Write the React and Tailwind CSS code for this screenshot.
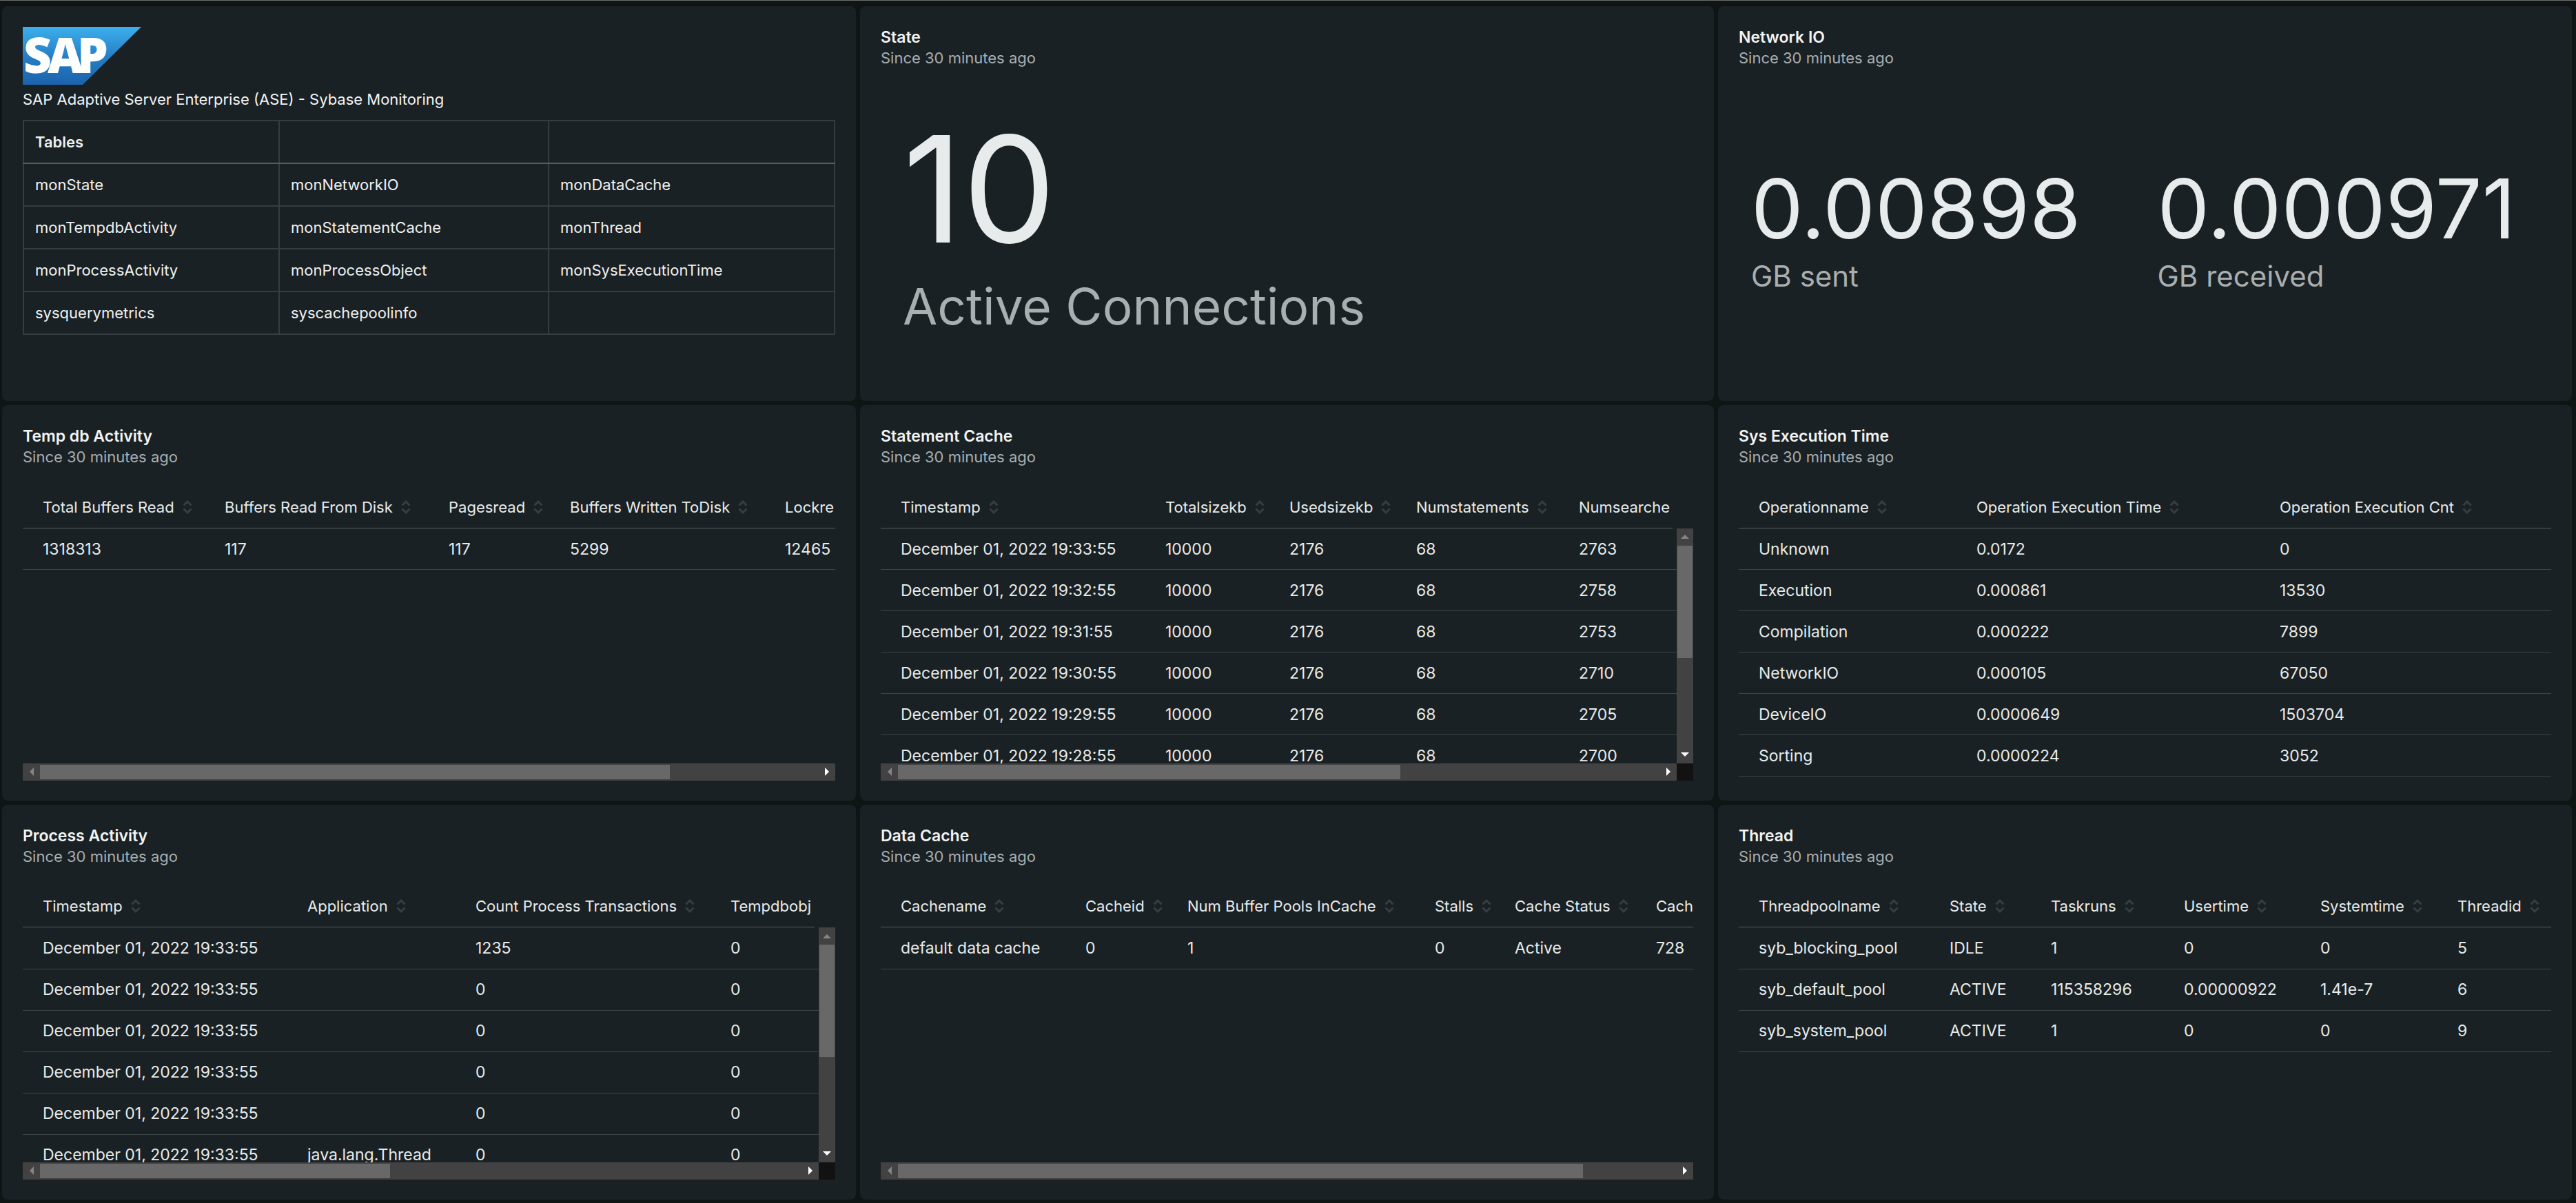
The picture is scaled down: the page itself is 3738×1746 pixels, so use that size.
const sort = (
  <svg viewBox="0 0 14 20" className="h-5 w-3.5 shrink-0 text-[#363e41]" fill="none" stroke="currentColor" strokeWidth="3" aria-hidden="true">
    <path d="M1.5 7.500 7 2l5.500 5.500M1.500 12.500 7 18l5.500-5.500" />
  </svg>
);

function Arrow({ dir, dim }) {
  const paths = {
    left: "M9 4v12L3 10z",
    right: "M3 4v12l6-6z",
    up: "M4 9h12l-6-6z",
    down: "M4 3h12l-6 6z",
  };
  const wide = dir === "up" || dir === "down";
  return (
    <svg viewBox={wide ? "0 0 20 12" : "0 0 12 20"} className={`${wide ? "h-3 w-5" : "h-5 w-3"} ${dim ? "text-[#858585]" : "text-white"}`} fill="currentColor" aria-hidden="true">
      <path d={paths[dir]} />
    </svg>
  );
}

function HBar({ size }) {
  return (
    <div className="flex h-[25px] min-w-0 flex-1 items-center bg-[#424242]">
      <button aria-label="Scroll left" className="flex w-[25px] justify-center"><Arrow dir="left" dim /></button>
      <div className="h-[21px] min-w-0 flex-1">
        <div className="h-full bg-[#686868]" style={{ width: `${size}%` }} />
      </div>
      <button aria-label="Scroll right" className="flex w-[25px] justify-center"><Arrow dir="right" /></button>
    </div>
  );
}

function VBar({ size }) {
  return (
    <div className="flex w-6 shrink-0 flex-col items-center bg-[#424242]">
      <button aria-label="Scroll up" className="flex h-[25px] items-center"><Arrow dir="up" dim /></button>
      <div className="min-h-0 w-[22px] flex-1">
        <div className="w-full bg-[#686868]" style={{ height: `${size}%` }} />
      </div>
      <button aria-label="Scroll down" className="flex h-[25px] items-center"><Arrow dir="down" /></button>
    </div>
  );
}

function Panel({ title, children }) {
  return (
    <section className="flex min-h-0 min-w-0 flex-col overflow-hidden rounded-lg bg-[#1a2124] px-[30px] pt-[30px] pb-[29px]">
      {title && (
        <header className="text-[22px] leading-[30px]">
          <h2 className="text-[23px] font-semibold text-[#f2f4f4]">{title}</h2>
          <p className="text-[#a9aeb0]">Since 30 minutes ago</p>
        </header>
      )}
      {children}
    </section>
  );
}

function Grid({ title, cols, rows, h, v }) {
  const total = cols.reduce((sum, c) => sum + c[1], 0);
  const colgroup = (
    <colgroup>
      {cols.map(([name, w]) => <col key={name} style={{ width: h ? w : `${(w / total) * 100}%` }} />)}
    </colgroup>
  );
  const table = `table-fixed whitespace-nowrap text-left ${h ? "" : "w-full"}`;
  const width = { width: h ? total : undefined };
  return (
    <Panel title={title}>
      <div className="mt-7 flex min-h-0 flex-1 flex-col text-[22px] leading-[30px] text-[#e8ebeb]">
        <div className={`shrink-0 overflow-hidden ${v ? "mr-[30px]" : ""}`}>
          <table className={table} style={width} aria-label={`${title} columns`}>
            {colgroup}
            <thead>
              <tr className="h-[60px] border-b border-[#535d5f]">
                {cols.map(([name]) => (
                  <th key={name} scope="col" className="pl-[29px] font-normal">
                    <button className="flex items-center gap-3">{name}{sort}</button>
                  </th>
                ))}
              </tr>
            </thead>
          </table>
        </div>
        <div className="flex min-h-0 flex-1">
          <div className="min-w-0 flex-1 overflow-hidden">
            <table className={`${table} text-[23px]`} style={width} aria-label={title}>
              {colgroup}
              <tbody>
                {rows.map((r, i) => (
                  <tr key={i} className="h-[60px] border-b border-[#3c4548]">
                    {r.map((cell, j) => <td key={j} className="pl-[29px]">{cell}</td>)}
                  </tr>
                ))}
              </tbody>
            </table>
          </div>
          {v && <VBar size={v} />}
        </div>
        {h && (
          <div className="flex shrink-0">
            <HBar size={h} />
            {v && <div className="w-6 bg-[#121212]" />}
          </div>
        )}
      </div>
    </Panel>
  );
}

function SapLogo() {
  return (
    <svg viewBox="0 0 172 84" className="h-[84px] w-[172px] shrink-0" role="img" aria-label="SAP">
      <defs>
        <linearGradient id="sap" x1="0" y1="0" x2="0" y2="1">
          <stop offset="0" stopColor="#3cb0ec" />
          <stop offset="0.5" stopColor="#2680c6" />
          <stop offset="1" stopColor="#1b62ac" />
        </linearGradient>
      </defs>
      <path d="M0 0h172L87 84H0z" fill="url(#sap)" />
      <g fontFamily="Open Sans, sans-serif" fontWeight="800" fontSize="71" fill="#fff">
        <text x="1" y="67">S</text>
        <text x="36" y="67">A</text>
        <text x="79" y="67">P</text>
      </g>
    </svg>
  );
}

const catalog = [
  ["monState", "monNetworkIO", "monDataCache"],
  ["monTempdbActivity", "monStatementCache", "monThread"],
  ["monProcessActivity", "monProcessObject", "monSysExecutionTime"],
  ["sysquerymetrics", "syscachepoolinfo", ""],
];

function Intro() {
  const cell = "border-2 border-[#353d41] px-4 text-left";
  const headCell = "border-2 border-[#353d41] border-b-[#555d60] px-4 text-left font-semibold";
  return (
    <Panel>
      <SapLogo />
      <h1 className="mt-1.5 text-[22px] leading-[30px] text-[#f2f4f4]">SAP Adaptive Server Enterprise (ASE) - Sybase Monitoring</h1>
      <table className="mt-[15px] w-full table-fixed border-collapse text-[22px] leading-[30px] text-[#eef0f0]">
        <colgroup><col className="w-[371px]" /><col className="w-[391px]" /><col /></colgroup>
        <thead>
          <tr className="h-[62px]">
            <th scope="col" className={headCell}>Tables</th>
            <td className={headCell} />
            <td className={headCell} />
          </tr>
        </thead>
        <tbody>
          {catalog.map((r) => (
            <tr key={r[0]} className="h-[62px]">
              {r.map((c, i) => <td key={i} className={cell}>{c}</td>)}
            </tr>
          ))}
        </tbody>
      </table>
    </Panel>
  );
}

function Traffic({ value, label }) {
  return (
    <div className="pl-[18px]">
      <p className="text-[120px] leading-[146px] text-[#e8ebeb]">{value}</p>
      <p className="text-[42px] leading-[50px] text-[#a9aeb0]">{label}</p>
    </div>
  );
}

const stamps = ["33", "32", "31", "30", "29", "28"];
const searches = ["2763", "2758", "2753", "2710", "2705", "2700"];

export default function App() {
  return (
    <main className="grid h-screen grid-cols-3 grid-rows-3 gap-1.5 border-t border-[#6b6f70] bg-[#0f1414] pt-2 pr-1.5 pb-[5px] pl-[3px] font-['Inter',sans-serif]">
      <Intro />

      <Panel title="State">
        <div className="mt-12 pl-8">
          <p className="text-[214px] leading-[256px] text-[#e8ebeb]">10</p>
          <p className="text-[73px] leading-[84px] text-[#a9aeb0]">Active Connections</p>
        </div>
      </Panel>

      <Panel title="Network IO">
        <div className="mt-[131px] grid grid-cols-2">
          <Traffic value="0.00898" label="GB sent" />
          <Traffic value="0.000971" label="GB received" />
        </div>
      </Panel>

      <Grid
        title="Temp db Activity"
        cols={[["Total Buffers Read", 264], ["Buffers Read From Disk", 325], ["Pagesread", 176], ["Buffers Written ToDisk", 312], ["Lockre", 230]]}
        rows={[["1318313", "117", "117", "5299", "12465"]]}
        h={81}
      />
      <Grid
        title="Statement Cache"
        cols={[["Timestamp", 384], ["Totalsizekb", 180], ["Usedsizekb", 184], ["Numstatements", 236], ["Numsearche", 230]]}
        rows={stamps.map((m, i) => [`December 01, 2022 19:${m}:55`, "10000", "2176", "68", searches[i]])}
        h={66}
        v={56}
      />
      <Grid
        title="Sys Execution Time"
        cols={[["Operationname", 316], ["Operation Execution Time", 440], ["Operation Execution Cnt", 423]]}
        rows={[
          ["Unknown", "0.0172", "0"],
          ["Execution", "0.000861", "13530"],
          ["Compilation", "0.000222", "7899"],
          ["NetworkIO", "0.000105", "67050"],
          ["DeviceIO", "0.0000649", "1503704"],
          ["Sorting", "0.0000224", "3052"],
        ]}
      />
      <Grid
        title="Process Activity"
        cols={[["Timestamp", 384], ["Application", 244], ["Count Process Transactions", 370], ["Tempdbobj", 230]]}
        rows={["1235", "0", "0", "0", "0", "0"].map((n, i) => ["December 01, 2022 19:33:55", i === 5 ? "java.lang.Thread" : "", n, "0"])}
        h={46}
        v={56}
      />
      <Grid
        title="Data Cache"
        cols={[["Cachename", 268], ["Cacheid", 148], ["Num Buffer Pools InCache", 359], ["Stalls", 116], ["Cache Status", 205], ["Cach", 200]]}
        rows={[["default data cache", "0", "1", "0", "Active", "728"]]}
        h={88}
      />
      <Grid
        title="Thread"
        cols={[["Threadpoolname", 277], ["State", 147], ["Taskruns", 193], ["Usertime", 198], ["Systemtime", 199], ["Threadid", 165]]}
        rows={[
          ["syb_blocking_pool", "IDLE", "1", "0", "0", "5"],
          ["syb_default_pool", "ACTIVE", "115358296", "0.00000922", "1.41e-7", "6"],
          ["syb_system_pool", "ACTIVE", "1", "0", "0", "9"],
        ]}
      />
    </main>
  );
}
